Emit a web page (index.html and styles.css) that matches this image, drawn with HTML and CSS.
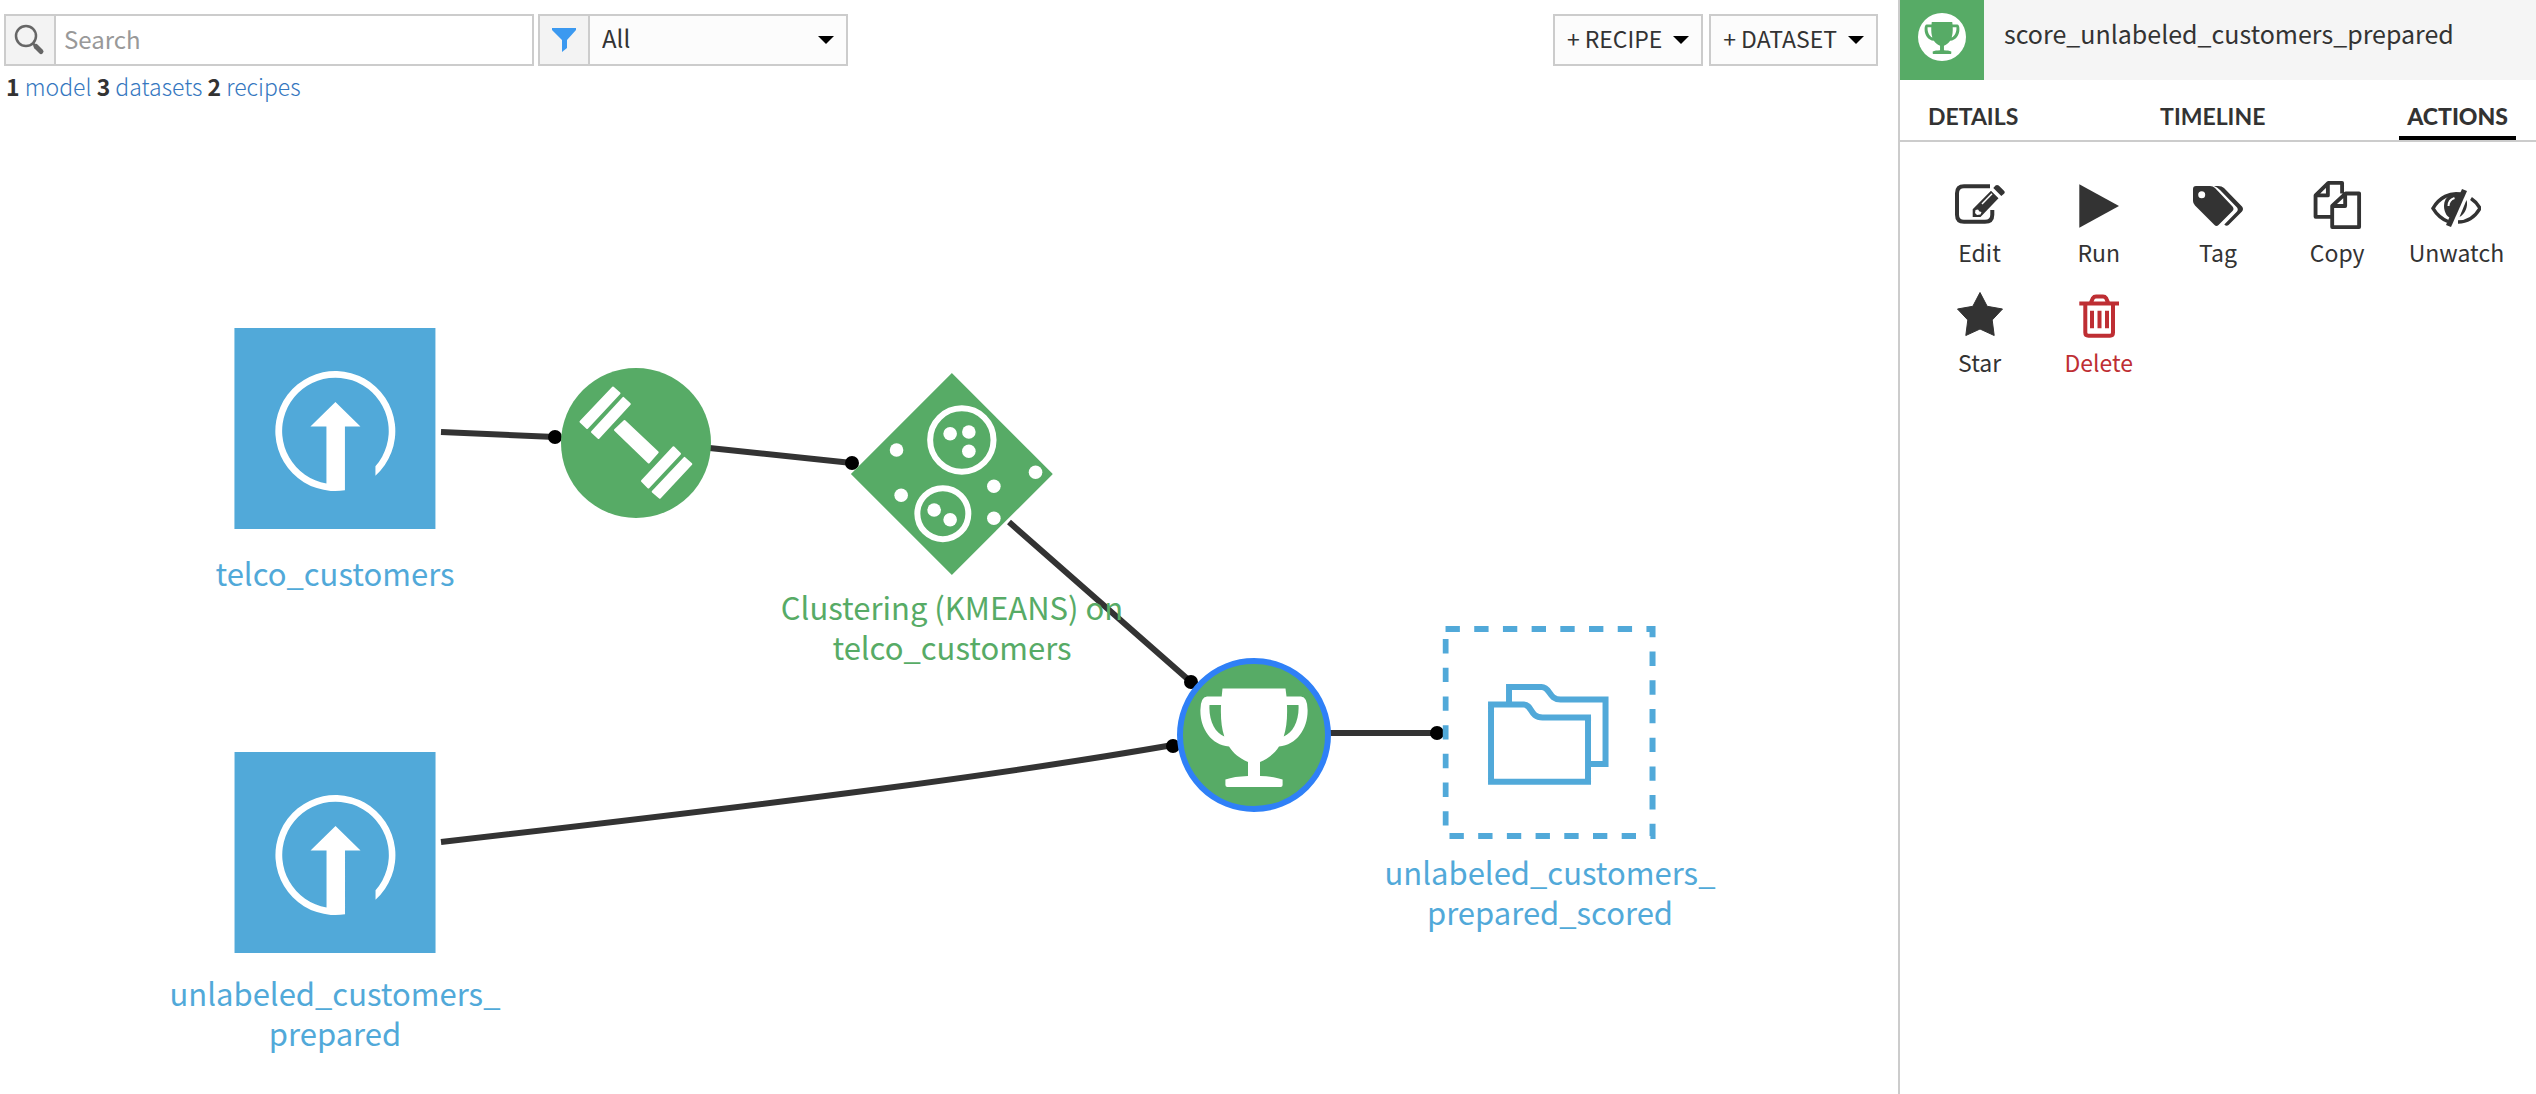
FILE: index.html
```html
<!DOCTYPE html>
<html lang="en">
<head>
<meta charset="utf-8">
<title>Flow</title>
<link rel="stylesheet" href="styles.css">
</head>
<body>
<svg class="defs" aria-hidden="true">
  <symbol id="trophy" viewBox="0 0 154 154">
    <path fill-rule="evenodd" d="M45.500 30.500H108.500L109.500 38.500H124Q130.500 39 130.600 52C131 70 120 87 102 88.500C98 95 92 100 83 104V118C92 118.300 100 119.500 105.600 121.500V127Q105.600 129 103.600 129H50.400Q48.400 129 48.400 127V121.500C54 119.500 62 118.300 71 118V104C62 100 56 95 52 88.500C34 87 23 70 23.400 52Q23.500 39 30 38.500H44.700ZM32.500 47H44C43.500 60 44.500 70 47.300 78.500C38 75 31.500 62 32.500 47ZM121.500 47H110C110.500 60 109.500 70 106.700 78.500C116 75 122.500 62 121.500 47Z"/>
  </symbol>
  <symbol id="upload" viewBox="0 0 201 201">
    <path d="M110.500 162.300A60 60 0 1 1 141 147.700V138.200A53.300 53.300 0 1 0 92 155.500V98.500H76L101 74L126 98.500H110.500Z"/>
  </symbol>
</svg>

<main class="flow">
  <div class="toolbar">
    <div class="field search">
      <label class="addon" for="q" aria-label="Search">
        <svg width="32" height="32" viewBox="0 0 32 32" fill="none" stroke="#666"><circle cx="12" cy="12" r="10" stroke-width="2.500"/><path d="M19 19.500L21 21.500" stroke-width="2.500"/><path d="M22 22.500L27 27.500" stroke-width="5" stroke-linecap="round"/></svg>
      </label>
      <input id="q" class="control" type="text" placeholder="Search">
    </div>
    <div class="field filter">
      <label class="addon" for="kind" aria-label="Filter">
        <svg width="24" height="24" viewBox="0 0 24 24" fill="#3b99f0"><path d="M0 0H24V2L15 12V20L10 24V12L0 2Z"/></svg>
      </label>
      <select id="kind" class="control"><option>All</option></select>
      <span class="caret"></span>
    </div>
    <div class="spacer"></div>
    <button class="btn" type="button"><span class="btn-text">+</span><span class="btn-text">RECIPE</span><span class="caret"></span></button>
    <button class="btn" type="button"><span class="btn-text">+</span><span class="btn-text">DATASET</span><span class="caret"></span></button>
  </div>
  <p class="stats"><b>1</b> <a href="#">model</a> <b>3</b> <a href="#">datasets</a> <b>2</b> <a href="#">recipes</a></p>

  <div class="canvas">
    <svg class="edges" width="1898" height="984" viewBox="0 110 1898 984" fill="none" stroke="#333" stroke-width="6">
      <path d="M441 432L555 437M700 447L852 463M1009 522L1191 682M441 842C807 800 1000 775 1173 745M1325 733H1437"/>
      <g fill="#000" stroke="none"><circle cx="555" cy="437" r="7"/><circle cx="852" cy="463" r="7"/><circle cx="1191" cy="682" r="7"/><circle cx="1173" cy="746" r="7"/><circle cx="1437" cy="733" r="7"/></g>
    </svg>

    <a class="node dataset telco" href="#">
      <svg class="tile" width="201" height="201" fill="#fff"><use href="#upload"/></svg>
      <span class="name">telco_customers</span>
    </a>
    <a class="node dataset unlabeled" href="#">
      <svg class="tile" width="201" height="201" fill="#fff"><use href="#upload"/></svg>
      <span class="name">unlabeled_customers_<br>prepared</span>
    </a>
    <a class="node train" href="#" aria-label="Train">
      <svg width="150" height="150" viewBox="0 0 150 150" fill="#fff" stroke="#fff" stroke-width="2" stroke-linejoin="round">
        <circle cx="75" cy="75" r="75" fill="#57ab66" stroke="none"/>
        <path d="M52 19.500L58.500 25.300L26.100 60L19.500 53.700ZM62.300 29.900L68.800 36L37.500 70L31 64ZM63.500 53L96.700 84.300L87.700 94.500L54 62ZM112.500 79.200L119 85.700L87.400 119.500L81 113ZM123.500 89.900L130.300 96L98.800 129.800L91.700 123.700Z"/>
      </svg>
    </a>
    <a class="node model clustering" href="#">
      <svg width="202" height="202" viewBox="0 0 202 202" fill="#fff">
        <path d="M101 0L202 101L101 202L0 101Z" fill="#57ab66"/>
        <g fill="none" stroke="#fff" stroke-width="6"><circle cx="111" cy="67" r="31.700"/><circle cx="92" cy="140.700" r="25.500"/></g>
        <circle cx="99.300" cy="60.700" r="6.800"/><circle cx="118" cy="59" r="6.800"/><circle cx="118" cy="78.300" r="6.800"/><circle cx="45.700" cy="77" r="6.800"/><circle cx="50.300" cy="122.300" r="6.800"/><circle cx="143" cy="113.300" r="6.800"/><circle cx="143" cy="145.300" r="6.800"/><circle cx="184.700" cy="99.300" r="6.800"/><circle cx="83.300" cy="137" r="6.800"/><circle cx="99.300" cy="146.700" r="6.800"/>
      </svg>
      <span class="name">Clustering (KMEANS) on<br>telco_customers</span>
    </a>
    <a class="node score" href="#" aria-label="Score">
      <svg width="154" height="154" viewBox="0 0 154 154" fill="#fff">
        <circle cx="77" cy="77" r="74" fill="#57ab66" stroke="#2f80f7" stroke-width="6"/>
        <use href="#trophy"/>
      </svg>
    </a>
    <a class="node dataset scored" href="#">
      <svg width="214" height="214" viewBox="1443 626 214 214" fill="none" stroke="#51a9d9" stroke-width="6">
        <rect x="1446" y="629" width="207" height="207" stroke-dasharray="14.350"/>
        <path d="M1491.500 704.500H1524C1533 704.500 1530 717.500 1543 717.500H1588.500V781.700H1491.500ZM1509.500 704V687H1542C1551 687 1549 699.500 1561 699.500H1606V764H1590"/>
      </svg>
      <span class="name">unlabeled_customers_<br>prepared_scored</span>
    </a>
  </div>
</main>

<aside class="panel">
  <header class="panel-head">
    <div class="badge"><svg width="48" height="48" viewBox="0 0 48 48"><circle cx="24" cy="24" r="24" fill="#fff"/><use href="#trophy" x="-1" y="-1" width="50" height="50" fill="#57ab66"/></svg></div>
    <h1 class="title">score_unlabeled_customers_prepared</h1>
  </header>
  <nav class="tabs">
    <a class="tab" href="#">DETAILS</a>
    <a class="tab" href="#">TIMELINE</a>
    <a class="tab active" href="#">ACTIONS</a>
  </nav>
  <div class="actions">
    <button class="action" type="button">
      <svg viewBox="0 0 50 50"><path d="M35 6.300H9Q2 6.300 2 13.300V34.700Q2 41.700 9 41.700H30Q37.300 41.700 37.300 34.700V30" fill="none" stroke="#333" stroke-width="4"/><path d="M17.700 37V29.300L36 10.700L43.500 18.300L25.500 37ZM38.300 8L40.500 5.600Q42 4.200 43.700 5.600L49 10.800Q50.500 12.300 49 13.800L46.300 16Z"/><path d="M27 24L37 13.800" stroke="#fff" stroke-width="1.500"/><path d="M20.500 30L23 29.500L24.500 31.500L26.500 32L25.500 34.500L22 35L20 33Z" fill="#fff"/></svg>
      Edit
    </button>
    <button class="action" type="button">
      <svg viewBox="0 0 50 50"><path d="M5.300 4.300L45 26L5.300 47.700Z"/></svg>
      Run
    </button>
    <button class="action" type="button">
      <svg viewBox="0 0 50 50"><path fill-rule="evenodd" d="M3 6H17Q20 6 22 8L39.500 26.500Q41.500 29 39.500 31L25.500 45Q23.500 46.800 21.500 45L2 25.500Q0 23.500 0 21V9Q0 6 3 6ZM8.700 11.200A3.500 3.500 0 1 0 8.700 18.200A3.500 3.500 0 1 0 8.700 11.200Z"/><path d="M21 6H25Q29 6 31 8L49 26.500Q51 29 49 31.500L35.500 45Q33.500 46.800 31.300 44.500L44 31.500Q45.500 29.500 44 27.500L27 10Q24 7 21 6Z"/></svg>
      Tag
    </button>
    <button class="action" type="button">
      <svg viewBox="0 0 50 52" fill="none" stroke="#333" stroke-width="4" stroke-linejoin="round"><path fill="none" d="M20 38.300H2.700V16L16 3H30.300V14M2.700 16H15.500V3M20 27L34 14H48V49H20ZM20 27H33.500V14"/></svg>
      Copy
    </button>
    <button class="action" type="button">
      <svg viewBox="0 0 50 50"><path d="M31 14.500C19 11.500 8 18 2 28.300C6 35 11 39 17 41.500M40 18.500C44 21 47 24.500 49 28.300C44 37 37 42 27 42" fill="none" stroke="#333" stroke-width="3.500"/><path d="M30 12.500C21 13 13 16 13 26C13 33 17 38 20 38Z"/><path d="M35.500 20C37.500 26 34 34 28.500 37Z"/><path d="M17.500 26Q17.500 20 23.500 18" fill="none" stroke="#fff" stroke-width="2"/><path d="M33.500 10L17.500 46" stroke="#333" stroke-width="5.500"/></svg>
      Unwatch
    </button>
    <button class="action" type="button">
      <svg viewBox="0 0 50 50"><path stroke="#333" stroke-linejoin="round" d="M25 2.500L32.200 16.300L47.500 19L37.200 30L39.200 45.500L25 39L10.800 45.500L12.800 30L2.500 19L17.800 16.300Z"/></svg>
      Star
    </button>
    <button class="action danger" type="button">
      <svg viewBox="0 0 50 50" fill="none" stroke="#be2e33" stroke-width="4"><path fill="none" d="M5.300 13.500H45M16.700 13L19 8Q20 6.500 22 6.500H29Q31 6.500 32 8L34.300 13M11.300 13V42.500Q11.300 45.700 14.500 45.700H36Q39 45.700 39 42.500V13M18 20.700V38.300M25.500 20.700V38.300M33 20.700V38.300"/></svg>
      Delete
    </button>
  </div>
</aside>
</body>
</html>
```

FILE: styles.css
```css
* { box-sizing: border-box; }

body {
  margin: 0;
  min-height: 100vh;
  display: flex;
  background: #fff;
  color: #333;
  font-family: "Noto Sans CJK SC", "Noto Sans", sans-serif;
  font-size: 23px;
  line-height: 32px;
}

a { color: inherit; text-decoration: none; }
button, input, select { font: inherit; color: inherit; }
.defs { position: absolute; width: 0; height: 0; }

/* Flow area */
.flow {
  flex: 1;
  min-width: 0;
  display: flex;
  flex-direction: column;
}

.toolbar {
  display: flex;
  gap: 4px;
  padding: 14px 20px 0 4px;
}

.field {
  display: flex;
  height: 52px;
  border: 2px solid #ccc;
  position: relative;
}
.search { width: 530px; }
.filter { width: 310px; background: #fcfcfc; }

.addon {
  flex: none;
  width: 50px;
  display: flex;
  align-items: center;
  justify-content: center;
  background: #f3f3f3;
  border-right: 2px solid #ccc;
}

.control {
  flex: 1;
  min-width: 0;
  height: 48px;
  padding: 0 0 4px 8px;
  border: 0;
  border-radius: 0;
  background: transparent;
  font-size: 24px;
  appearance: none;
  outline: 0;
}
.filter .control { padding-left: 12px; }
.control::placeholder { color: #999; opacity: 1; }

.caret {
  border: 8px solid transparent;
  border-top-color: #000;
  border-bottom: 0;
}
.field .caret {
  position: absolute;
  right: 12px;
  top: 20px;
  pointer-events: none;
}

.spacer { flex: 1; }

.btn {
  display: flex;
  align-items: center;
  gap: 5px;
  height: 52px;
  padding: 0 12px;
  border: 2px solid #ccc;
  background: #fcfcfc;
}
.btn-text { padding-bottom: 4px; }
.btn + .btn { margin-left: 2px; }
.btn .caret { margin-left: 6px; }

.stats {
  margin: 0;
  padding: 4px 6px 8px;
  font-weight: 300;
}
.stats b { font-weight: 700; }
.stats a { color: #3577c0; }

.canvas {
  flex: 1;
  position: relative;
  min-height: 960px;
}
.edges { position: absolute; left: 0; top: 0; }

/* Nodes are placed freely on the canvas */
.node {
  position: absolute;
  display: flex;
  flex-direction: column;
  align-items: center;
  transform: translateX(-50%);
  font-size: 31px;
  line-height: 40px;
  text-align: center;
  white-space: nowrap;
}
.node svg { display: block; }
.dataset { color: #51a9d9; }
.model { color: #57ab66; }
.tile { background: #51a9d9; }
.name { margin-top: 12px; }

.telco { left: 335px; top: 218px; }
.unlabeled { left: 335px; top: 642px; }
.train { left: 636px; top: 258px; }
.clustering { left: 952px; top: 263px; }
.score { left: 1254px; top: 548px; }
.scored { left: 1550px; top: 516px; }
.telco .name { margin-top: 24px; }
.unlabeled .name { margin-top: 20px; }

/* Side panel */
.panel {
  flex: none;
  width: 638px;
  border-left: 2px solid #ccc;
}
.panel-head {
  display: flex;
  height: 80px;
  background: #f5f5f5;
}
.badge {
  width: 84px;
  padding: 13px 18px;
  background: #57ab66;
}
.badge svg { display: block; }
.title {
  margin: 0;
  padding: 17px 20px;
  font-size: 25px;
  font-weight: 400;
}

.tabs {
  display: flex;
  justify-content: space-between;
  padding: 0 20px;
  height: 62px;
  border-bottom: 2px solid #ccc;
  font-family: Lato, sans-serif;
  font-weight: 700;
}
.tab {
  padding: 20px 8px 0;
  border-bottom: 4px solid transparent;
}
.tab.active { font-weight: 900; border-color: #000; }

.actions {
  display: grid;
  grid-template-columns: repeat(5, 1fr);
  row-gap: 20px;
  padding: 38px 20px;
}
.action {
  display: flex;
  flex-direction: column;
  align-items: center;
  gap: 6px;
  height: 90px;
  padding: 0;
  border: 0;
  background: none;
}
.action svg {
  flex: none;
  width: 50px;
  height: 50px;
  fill: #333;
}
.danger { color: #be2e33; }
```
